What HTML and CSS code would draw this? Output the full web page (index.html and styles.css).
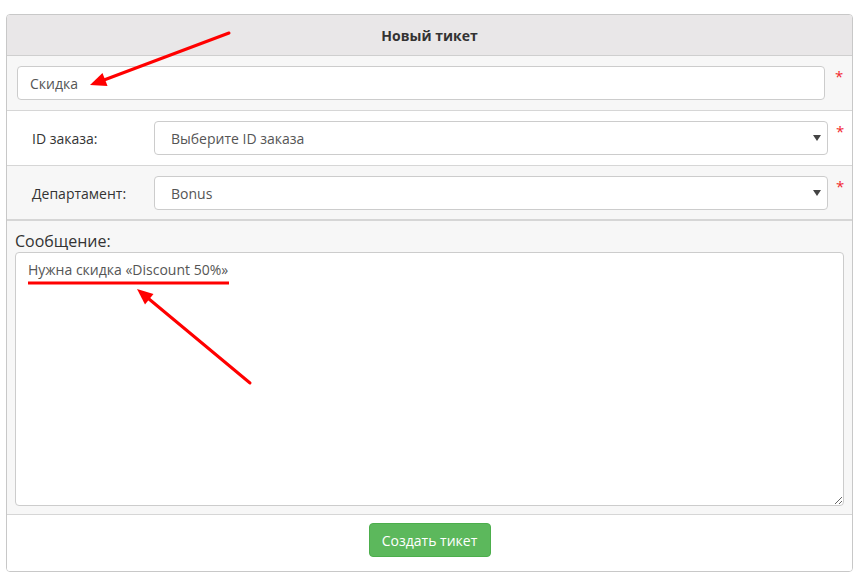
FILE: index.html
```html
<!DOCTYPE html>
<html lang="ru">
<head>
<meta charset="utf-8">
<title>Новый тикет</title>
<link rel="stylesheet" href="styles.css">
</head>
<body>
<div class="panel">
  <div class="panel-head">Новый тикет</div>
  <div class="row row-alt">
    <input class="control subject" type="text" value="Скидка">
    <span class="req">*</span>
  </div>
  <div class="row row-field">
    <label class="lbl">ID заказа:</label>
    <div class="select-wrap"><select class="control sel"><option>Выберите ID заказа</option></select></div>
    <span class="req">*</span>
  </div>
  <div class="row row-field row-alt row-thick">
    <label class="lbl">Департамент:</label>
    <div class="select-wrap"><select class="control sel"><option>Bonus</option></select></div>
    <span class="req">*</span>
  </div>
  <div class="msg">
    <label class="msg-lbl">Сообщение:</label>
    <textarea class="control area">Нужна скидка «Discount 50%»</textarea>
  </div>
  <div class="foot">
    <button class="btn" type="button">Создать тикет</button>
  </div>
</div>
<svg class="annot" width="861" height="582" viewBox="0 0 861 582">
  <line x1="229" y1="33" x2="104" y2="80" stroke="#f00" stroke-width="3" stroke-linecap="round"/>
  <polygon points="90,85 107.5,86 102.5,73" fill="#f00"/>
  <line x1="28" y1="283" x2="229" y2="283" stroke="#f00" stroke-width="3"/>
  <line x1="250" y1="383" x2="149" y2="299" stroke="#f00" stroke-width="3" stroke-linecap="round"/>
  <polygon points="137,289 153.5,294 145,304.5" fill="#f00"/>
</svg>
</body>
</html>
```
FILE: styles.css
```css
* { box-sizing: border-box; }
html, body { margin: 0; padding: 0; background: #fff; }
body {
  font-family: "Open Sans", "Noto Sans", "DejaVu Sans", sans-serif;
  font-size: 14px;
  color: #555;
  position: relative;
  width: 861px;
  height: 582px;
  overflow: hidden;
}
.panel {
  margin: 14px 0 0 6px;
  width: 847px;
  border: 1px solid #c8c8c8;
  border-radius: 4px;
  display: flex;
  flex-direction: column;
  overflow: hidden;
}
.panel-head {
  height: 41px;
  background: #e9e7e8;
  border-bottom: 1px solid #cfcfcf;
  display: flex;
  align-items: center;
  justify-content: center;
  font-weight: 700;
  font-size: 14px;
  color: #333;
}
.row {
  height: 55px;
  border-bottom: 1px solid #d6d6d6;
  display: flex;
  align-items: flex-start;
  padding: 10px 0 0 10px;
  background: #fff;
}
.row-alt { background: #f7f7f7; }
.row-thick { border-bottom: 2px solid #d6d6d6; }
.control {
  font-family: inherit;
  font-size: 14px;
  color: #555;
  background: #fff;
  border: 1px solid #ccc;
  border-radius: 4px;
  outline: none;
}
.subject {
  width: 808px;
  height: 34px;
  padding: 0 12px;
}
.req {
  color: #f2262e;
  font-size: 15px;
  line-height: 1;
  margin-left: 10px;
  margin-top: 3px;
}
.row-field .req { margin-left: 8px; }
.lbl {
  width: 137px;
  height: 34px;
  display: flex;
  align-items: center;
  padding-left: 15px;
  color: #333;
}
.select-wrap {
  position: relative;
  width: 674px;
  height: 34px;
}
.select-wrap::after {
  content: "";
  position: absolute;
  right: 7px;
  top: 14px;
  border-left: 4px solid transparent;
  border-right: 4px solid transparent;
  border-top: 6px solid #444;
  pointer-events: none;
}
.sel {
  -webkit-appearance: none;
  appearance: none;
  width: 100%;
  height: 34px;
  padding: 0 16px;
}
.msg {
  background: #f7f7f7;
  border-bottom: 1px solid #d6d6d6;
  padding: 9px 8px 8px 8px;
  display: flex;
  flex-direction: column;
}
.msg-lbl {
  font-size: 16px;
  color: #333;
  line-height: 22px;
  margin-bottom: 0;
}
.area {
  width: 829px;
  height: 254px;
  padding: 7px 12px;
  line-height: 20px;
  resize: vertical;
}
.foot {
  height: 56px;
  display: flex;
  justify-content: center;
  padding-top: 8px;
  background: #fff;
}
.btn {
  width: 122px;
  height: 34px;
  background: #5cb85c;
  border: 1px solid #4cae4c;
  border-radius: 4px;
  color: #fff;
  font-family: inherit;
  font-size: 14px;
  padding: 0;
}
.annot {
  position: absolute;
  left: 0;
  top: 0;
  pointer-events: none;
}
```
